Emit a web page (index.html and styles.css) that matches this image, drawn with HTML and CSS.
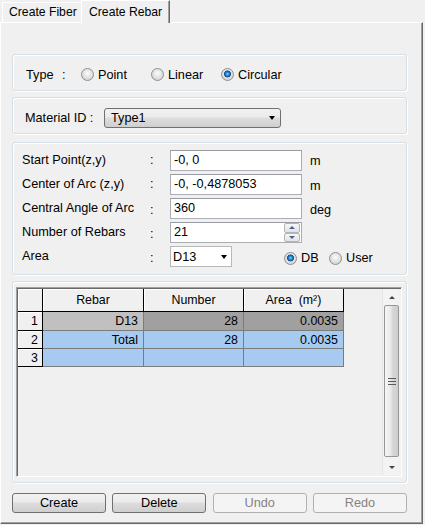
FILE: index.html
```html
<!DOCTYPE html>
<html>
<head>
<meta charset="utf-8">
<link rel="stylesheet" href="styles.css">
</head>
<body>
<div class="tabs">
  <div class="tab">Create Fiber</div>
  <div class="tab active">Create Rebar</div>
</div>
<div class="panel">
  <div class="group g-type">
    <span class="tlabel">Type</span><span class="tcolon">:</span>
    <span class="opt"><span class="radio"></span>Point</span>
    <span class="opt"><span class="radio"></span>Linear</span>
    <span class="opt"><span class="radio on"></span>Circular</span>
  </div>
  <div class="group g-mat">
    <span class="mlabel">Material ID :</span>
    <div class="combo"><span>Type1</span><span class="arrow"></span></div>
  </div>
  <div class="group g-fields">
    <span class="flabel">Start Point(z,y)</span><span class="fcolon">:</span><div class="input">-0, 0</div><span class="unit">m</span>
    <span class="flabel">Center of Arc (z,y)</span><span class="fcolon">:</span><div class="input">-0, -0,4878053</div><span class="unit low">m</span>
    <span class="flabel">Central Angle of Arc</span><span class="fcolon low">:</span><div class="input">360</div><span class="unit low">deg</span>
    <span class="flabel">Number of Rebars</span><span class="fcolon low">:</span><div class="input spin-input"><span class="itext">21</span><span class="spin"><span class="sbtn"><span class="up"></span></span><span class="sbtn"><span class="down"></span></span></span></div><span></span>
    <span class="flabel">Area</span><span class="fcolon low">:</span>
    <div class="areactl">
      <div class="combo2"><span>D13</span><span class="arrow"></span></div>
      <span class="opt db"><span class="radio on"></span>DB</span>
      <span class="opt"><span class="radio"></span>User</span>
    </div>
  </div>
  <div class="group g-table">
    <div class="grid">
      <div class="table">
        <div class="hc"></div><div class="hc c">Rebar</div><div class="hc c">Number</div><div class="hc c">Area&nbsp; (m²)</div>
        <div class="hc r">1</div><div class="dc g1">D13</div><div class="dc g2">28</div><div class="dc g2">0.0035</div>
        <div class="hc r">2</div><div class="dc bl">Total</div><div class="dc bl">28</div><div class="dc bl">0.0035</div>
        <div class="hc r">3</div><div class="dc bl"></div><div class="dc bl"></div><div class="dc bl"></div>
      </div>
      <div class="vscroll">
        <div class="sarrow"><span class="up dark"></span></div>
        <div class="thumb"><svg width="8" height="7" viewBox="0 0 8 7"><path d="M0 0.5H8M0 3.5H8M0 6.5H8" stroke="#5a5a5a" stroke-width="1"/></svg></div>
        <div class="sarrow"><span class="down dark"></span></div>
      </div>
    </div>
  </div>
  <div class="buttons">
    <div class="btn">Create</div>
    <div class="btn">Delete</div>
    <div class="btn dis">Undo</div>
    <div class="btn dis">Redo</div>
  </div>
</div>
</body>
</html>
```

FILE: styles.css
```css
* { box-sizing: border-box; }
html, body { margin: 0; padding: 0; }
body {
  width: 425px;
  height: 525px;
  overflow: hidden;
  background: #f0f0f0;
  font: 12.7px "Liberation Sans", Arial, sans-serif;
  color: #000;
}
.tabs {
  display: flex;
  align-items: flex-end;
  height: 22px;
  padding-left: 2px;
  font-size: 12.2px;
}
.tab {
  width: 79px;
  height: 20px;
  padding-left: 6px;
  line-height: 19px;
  border-left: 1px solid #fff;
  border-top: 1px solid #fff;
  white-space: nowrap;
}
.tab.active {
  width: 89px;
  height: 23px;
  margin-bottom: -1px;
  position: relative;
  z-index: 1;
  padding-left: 7px;
  line-height: 22px;
  background: #f0f0f0;
  border-right: 1px solid #696969;
  box-shadow: inset -1px 0 #a0a0a0;
}
.panel {
  width: 423px;
  height: 502px;
  border-top: 1px solid #fff;
  border-left: 1px solid #fff;
  border-right: 1px solid #696969;
  border-bottom: 1px solid #696969;
  box-shadow: inset -1px -1px #a0a0a0;
  padding: 31px 0 0 11px;
}
.group {
  width: 395px;
  border: 1px solid #d5dfe5;
  border-radius: 3px;
  box-shadow: inset 1px 1px #fff, 1px 1px #fff;
}
.g-type {
  height: 37px;
  display: flex;
  align-items: center;
  padding: 4px 0 0 13px;
}
.tlabel { width: 36px; }
.tcolon { width: 19px; }
.opt {
  display: flex;
  align-items: center;
  gap: 4px;
  width: 70px;
  white-space: nowrap;
}
.radio {
  width: 13px;
  height: 13px;
  flex: none;
  border-radius: 50%;
  border: 1px solid #8e8f8f;
  background: radial-gradient(circle at 50% 40%, #fbfbfb 0, #e4e4e4 45%, #c8c8c8 100%);
}
.radio.on {
  background:
    radial-gradient(circle at 50% 45%, #8fd6ff 0, #2b8fd8 1.5px, #10508f 3.2px, rgba(16,80,143,0) 3.8px),
    radial-gradient(circle at 50% 40%, #fbfbfb 0, #e4e4e4 45%, #c8c8c8 100%);
}
.g-mat {
  height: 37px;
  margin-top: 6px;
  display: flex;
  align-items: flex-start;
  padding: 10px 0 0 12px;
}
.mlabel { width: 79px; line-height: 20px; }
.combo {
  width: 177px;
  height: 20px;
  border: 1px solid #707070;
  border-radius: 3px;
  background: linear-gradient(#f2f2f2, #ebebeb 45%, #dddddd 50%, #cfcfcf);
  display: flex;
  align-items: center;
  justify-content: space-between;
  padding: 0 5px 0 6px;
}
.arrow {
  width: 0;
  height: 0;
  border-left: 3.5px solid transparent;
  border-right: 3.5px solid transparent;
  border-top: 4px solid #000;
}
.g-fields {
  height: 133px;
  margin-top: 8px;
  display: grid;
  grid-template-columns: 128px 20px 132px auto;
  grid-auto-rows: 21px;
  row-gap: 3px;
  align-items: center;
  padding: 7px 0 0 9px;
}
.flabel { white-space: nowrap; margin-top: -2px; }
.fcolon { margin-top: -1px; }
.fcolon.low { margin-top: 3px; }
.unit { padding-left: 8px; }
.unit.low { margin-top: 2px; }
.input {
  height: 21px;
  border: 1px solid #abadb3;
  border-top-color: #9a9ca4;
  background: #fff;
  padding-left: 3px;
  line-height: 19px;
  white-space: nowrap;
  overflow: hidden;
}
.spin-input {
  display: flex;
  justify-content: space-between;
  padding-right: 1px;
}
.spin {
  display: flex;
  flex-direction: column;
  width: 16px;
}
.sbtn {
  height: 9.5px;
  border: 1px solid #b4b4b4;
  border-radius: 2px;
  background: linear-gradient(#f7f7f7, #e2e2e2);
  display: flex;
  align-items: center;
  justify-content: center;
}
.up, .down {
  width: 0;
  height: 0;
  border-left: 3px solid transparent;
  border-right: 3px solid transparent;
}
.up { border-bottom: 3px solid #4a6291; }
.down { border-top: 3px solid #4a6291; }
.up.dark { border-bottom-color: #444; border-left-width: 3.5px; border-right-width: 3.5px; }
.down.dark { border-top-color: #444; border-left-width: 3.5px; border-right-width: 3.5px; }
.areactl {
  grid-column: 3 / span 2;
  display: flex;
  align-items: center;
}
.combo2 {
  width: 62px;
  height: 21px;
  border: 1px solid #b8b8b8;
  background: #fff;
  display: flex;
  align-items: center;
  justify-content: space-between;
  padding: 0 4px 0 2px;
}
.opt.db { margin-left: 52px; width: 45px; margin-top: 3px; }
.areactl .opt:last-child { margin-top: 3px; }
.g-table {
  height: 202px;
  margin-top: 6px;
  padding: 5px 0 0 3px;
}
.grid {
  width: 386px;
  height: 190px;
  border-left: 1px solid #a0a0a0;
  border-top: 1px solid #a0a0a0;
  border-right: 1px solid #fff;
  border-bottom: 1px solid #fff;
  box-shadow: inset 1px 1px #696969;
  padding: 1px 2px 0 1px;
  display: flex;
  justify-content: space-between;
}
.table {
  display: grid;
  grid-template-columns: 25px 101px 100px 100px;
  grid-template-rows: 23px 19px 18px 18px;
  align-self: flex-start;
  font-size: 12.4px;
}
.hc {
  background: #f0f0f0;
  border-right: 1px solid #000;
  border-bottom: 1px solid #000;
  box-shadow: inset 1px 1px #fff;
  display: flex;
  align-items: center;
}
.hc.c { justify-content: center; }
.hc.r { justify-content: flex-end; padding-right: 4px; }
.dc {
  border-right: 1px solid #7b7b7b;
  border-bottom: 1px solid #7b7b7b;
  display: flex;
  align-items: center;
  justify-content: flex-end;
  padding-right: 5px;
}
.g1 { background: #c0c0c0; }
.g2 { background: #a0a0a0; }
.bl { background: #a6caf0; }
.vscroll {
  width: 17px;
  height: 186px;
  border-left: 1px solid #e6e6e6;
  background: #f3f3f3;
  display: flex;
  flex-direction: column;
  padding: 0 0 0 1px;
}
.sarrow {
  height: 16px;
  display: flex;
  align-items: center;
  justify-content: center;
  flex: none;
}
.thumb {
  flex: 1;
  margin: 0 0 2px 0;
  border: 1px solid #979797;
  border-radius: 2px;
  background: linear-gradient(to right, #f6f6f6, #e9e9e9 45%, #d9d9d9 55%, #cdcdcd);
  display: flex;
  align-items: center;
  justify-content: center;
}
.buttons {
  width: 395px;
  margin-top: 10px;
  display: flex;
  justify-content: space-between;
}
.btn {
  width: 94px;
  height: 20px;
  border: 1px solid #707070;
  border-radius: 3px;
  background: linear-gradient(#f2f2f2, #ebebeb 45%, #dddddd 50%, #cfcfcf);
  text-align: center;
  line-height: 18px;
}
.btn.dis {
  border-color: #adb2b5;
  background: #f4f4f4;
  color: #838383;
}
```
